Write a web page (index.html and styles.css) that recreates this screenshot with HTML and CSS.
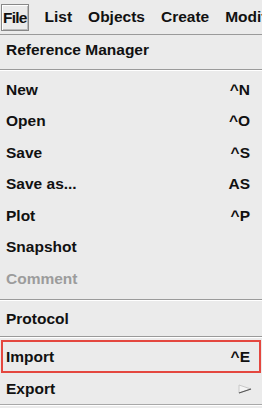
FILE: index.html
```html
<!DOCTYPE html>
<html lang="en">
<head>
    <meta charset="UTF-8">
    <title>File menu</title>
    <link rel="stylesheet" href="styles.css">
</head>
<body>
    <div class="menubar">
        <span class="menu-title active">File</span>
        <span class="menu-title">List</span>
        <span class="menu-title">Objects</span>
        <span class="menu-title">Create</span>
        <span class="menu-title">Modify</span>
    </div>

    <div class="menu">
        <div class="item first">Reference Manager</div>
        <div class="sep"></div>
        <div class="item">New<span class="key">^N</span></div>
        <div class="item">Open<span class="key">^O</span></div>
        <div class="item">Save<span class="key">^S</span></div>
        <div class="item">Save as...<span class="key">AS</span></div>
        <div class="item">Plot<span class="key">^P</span></div>
        <div class="item">Snapshot</div>
        <div class="item disabled">Comment</div>
        <div class="sep"></div>
        <div class="item">Protocol</div>
        <div class="sep small"></div>
        <div class="item selected">Import<span class="key">^E</span></div>
        <div class="item last">Export
            <svg class="arrow" width="14" height="10" viewBox="0 0 14 10">
                <polygon points="1,1 13,5 1,9" fill="#f4f4f4" stroke="#c8c8c8" stroke-width="1"/>
                <line x1="1" y1="9" x2="13" y2="5" stroke="#555" stroke-width="1.2"/>
            </svg>
        </div>
        <div class="menu-end"></div>
    </div>
</body>
</html>
```

FILE: styles.css
```css
* {
    box-sizing: border-box;
}

body {
    margin: 0;
    background-color: #ebebeb;
    font-family: "Liberation Sans", Arial, sans-serif;
    font-weight: bold;
    font-size: 15.5px;
    color: #111;
    width: 262px;
    height: 408px;
    overflow: hidden;
}

.menubar {
    display: flex;
    align-items: center;
    gap: 16px;
    height: 35px;
    border-bottom: 1px solid #9a9a9a;
    white-space: nowrap;
    overflow: hidden;
    padding-left: 1px;
}

.menu-title {
    line-height: 24px;
}

.menu-title.active {
    padding: 0 1px;
    height: 27px;
    line-height: 25px;
    letter-spacing: -0.8px;
    border: 1px solid #888;
    box-shadow: inset 1px 1px 0 #fff, inset -1px -1px 0 #bbb;
}

.menu {
    display: flex;
    flex-direction: column;
}

.item {
    display: flex;
    align-items: center;
    justify-content: space-between;
    height: 31.5px;
    padding: 0 9px 0 3px;
    border: 2px solid transparent;
    margin: 0 1px;
}

.item.first {
    height: 30px;
}

.item.disabled {
    color: #9c9c9c;
}

.item.selected {
    border-color: #e4473f;
    height: 33px;
}

.item.last {
    height: 31px;
}

.sep {
    height: 9px;
}

.sep::after {
    content: "";
    display: block;
    margin-top: 4px;
    height: 1px;
    background: #9a9a9a;
    box-shadow: 0 1px 0 #fff;
}

.sep.small {
    height: 5px;
}

.sep.small::after {
    margin-top: 1px;
}

.menu-end {
    height: 1px;
    background: #a8a8a8;
    box-shadow: 0 1px 0 #fff;
}

.arrow {
    margin-right: -2px;
}
```
